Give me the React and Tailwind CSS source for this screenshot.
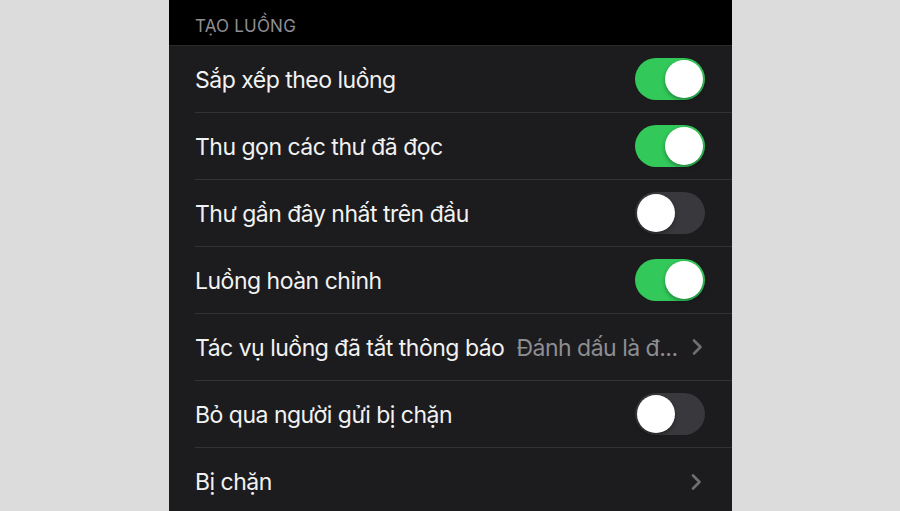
import React from "react";

function Toggle({ on }) {
  return (
    <div
      className={
        "relative w-[70px] h-[42px] rounded-full shrink-0 " +
        (on ? "bg-[#32c95a]" : "bg-[#39393d]")
      }
    >
      <div
        className={
          "absolute top-[2px] w-[38px] h-[38px] rounded-full bg-white shadow-[0_2px_4px_rgba(0,0,0,0.35)] " +
          (on ? "right-[2px]" : "left-[2px]")
        }
      />
    </div>
  );
}

function Chevron() {
  return (
    <svg width="12" height="18" viewBox="0 0 12 18" className="shrink-0">
      <path d="M3 2.5 L9.5 9 L3 15.5" fill="none" stroke="#6e6e73" strokeWidth="2.6" strokeLinecap="round" strokeLinejoin="round" />
    </svg>
  );
}

function Row({ label, right, last }) {
  return (
    <div className="h-[67px] shrink-0 pl-[26px] flex">
      <div
        className={
          "flex-1 min-w-0 flex items-center pr-[27px] overflow-hidden " +
          (last ? "" : "border-b-[1.5px] border-[#323236]")
        }
      >
        <span className="text-[23px] tracking-[-0.5px] text-[#f2f2f2] whitespace-nowrap mt-[2px]">{label}</span>
        <div className="flex-1" />
        {right}
      </div>
    </div>
  );
}

export default function App() {
  return (
    <div
      className="w-[900px] h-[511px] bg-[#dcdcdc] flex justify-center overflow-hidden"
      style={{ fontFamily: "Inter, 'Noto Sans', sans-serif" }}
    >
      <div className="w-[563px] ml-[1px] bg-[#1c1c1e] flex flex-col">
        <div className="h-[46px] shrink-0 bg-black pl-[26px] flex items-center border-b border-[#2a2a2c]">
          <span className="text-[17px] text-[#8e8e93] tracking-[0.2px] mt-[9px]">TẠO LUỒNG</span>
        </div>
        <Row label="Sắp xếp theo luồng" right={<Toggle on />} />
        <Row label="Thu gọn các thư đã đọc" right={<Toggle on />} />
        <Row label="Thư gần đây nhất trên đầu" right={<Toggle on={false} />} />
        <Row label="Luồng hoàn chỉnh" right={<Toggle on />} />
        <Row
          label="Tác vụ luồng đã tắt thông báo"
          right={
            <div className="flex items-center gap-[13px] ml-[12px] shrink-0">
              <span className="text-[23px] tracking-[-0.5px] text-[#8e8e93] whitespace-nowrap mt-[2px]">Đánh dấu là đ...</span>
              <div className="mr-[3px]"><Chevron /></div>
            </div>
          }
        />
        <Row label="Bỏ qua người gửi bị chặn" right={<Toggle on={false} />} />
        <Row label="Bị chặn" right={<div className="mr-[3px]"><Chevron /></div>} last />
      </div>
    </div>
  );
}
